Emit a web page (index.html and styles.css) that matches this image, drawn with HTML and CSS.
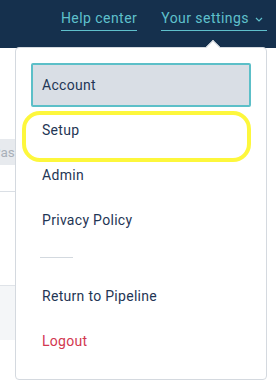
FILE: index.html
```html
<!DOCTYPE html>
<html>
<head>
<meta charset="utf-8">
<link rel="stylesheet" href="styles.css">
</head>
<body>
<header class="topbar">
  <nav class="toplinks">
    <a class="toplink">Help center</a>
    <a class="toplink settings">Your settings
      <svg class="chev" width="8" height="5" viewBox="0 0 8 5"><path d="M1 1 L4 4 L7 1" fill="none" stroke="currentColor" stroke-width="1.2"/></svg>
    </a>
  </nav>
</header>
<main class="page">
  <div class="field"><span class="placeholder">Password</span></div>
  <div class="rule rule-a"></div>
  <div class="panel-bg"></div>
</main>
<div class="dropdown">
  <span class="caret"></span>
  <ul class="menu">
    <li class="item active">Account</li>
    <li class="item setup">Setup<span class="highlight"></span></li>
    <li class="item">Admin</li>
    <li class="item">Privacy Policy</li>
    <li class="sep"></li>
    <li class="item">Return to Pipeline</li>
    <li class="item logout">Logout</li>
  </ul>
</div>
</body>
</html>
```
FILE: styles.css
```css
* { box-sizing: border-box; }
html, body { margin: 0; padding: 0; }
body {
  width: 276px;
  height: 388px;
  overflow: hidden;
  background: #fff;
  font-family: Roboto, "Liberation Sans", sans-serif;
  position: relative;
}
.topbar {
  height: 48px;
  background: #15304d;
  display: flex;
  justify-content: flex-end;
  padding-right: 9px;
}
.toplinks {
  display: flex;
  gap: 24px;
  padding-top: 9px;
}
.toplink {
  color: #5fc0cc;
  font-size: 14px;
  letter-spacing: 0.45px;
  line-height: 18px;
  height: 22px;
  border-bottom: 1px solid #5fc0cc;
  display: flex;
  align-items: flex-start;
  gap: 6px;
}
.chev { margin-top: 8px; margin-right: 4px; }
.page {
  padding-top: 91px;
}
.field {
  height: 26px;
  background: #e7eaee;
  width: 100px;
  margin-left: -20px;
  padding-left: 12px;
  display: flex;
  align-items: center;
  overflow: hidden;
}
.placeholder { color: #a9b0b9; font-size: 13.5px; }
.rule-a {
  margin-top: 26px;
  height: 1px;
  background: #dadfe5;
  width: 20px;
}
.panel-bg {
  margin-top: 93px;
  height: 55px;
  width: 20px;
  background: #f4f6f8;
  border-top: 1px solid #dfe3e8;
}
.dropdown {
  position: absolute;
  left: 15px;
  top: 47px;
  width: 252px;
  height: 333px;
  background: #fff;
  border: 1px solid #d4d9df;
  border-radius: 4px;
}
.caret {
  position: absolute;
  top: -6px;
  left: 192px;
  width: 10px;
  height: 10px;
  background: #fff;
  transform: rotate(45deg);
  border-left: 1px solid #d4d9df;
  border-top: 1px solid #d4d9df;
}
.menu {
  list-style: none;
  margin: 0;
  padding: 15px 15px 0 15px;
  position: relative;
}
.item {
  height: 44px;
  margin-bottom: 1px;
  display: flex;
  align-items: center;
  padding-left: 9px;
  border: 2px solid transparent;
  color: #1f3655;
  font-size: 14px;
  letter-spacing: 0.3px;
  position: relative;
}
.item.active {
  background: #d9dee5;
  border-color: #5cbfc8;
  border-radius: 2px;
}
.item.logout { color: #d2374f; }
.sep {
  height: 1px;
  width: 33px;
  margin: 15px 0 16px 9px;
  background: #d3d9df;
}
.highlight {
  position: absolute;
  left: -11px;
  top: 1px;
  width: 229px;
  height: 51px;
  border: 4px solid #fdf73c;
  border-radius: 18px;
}
```
